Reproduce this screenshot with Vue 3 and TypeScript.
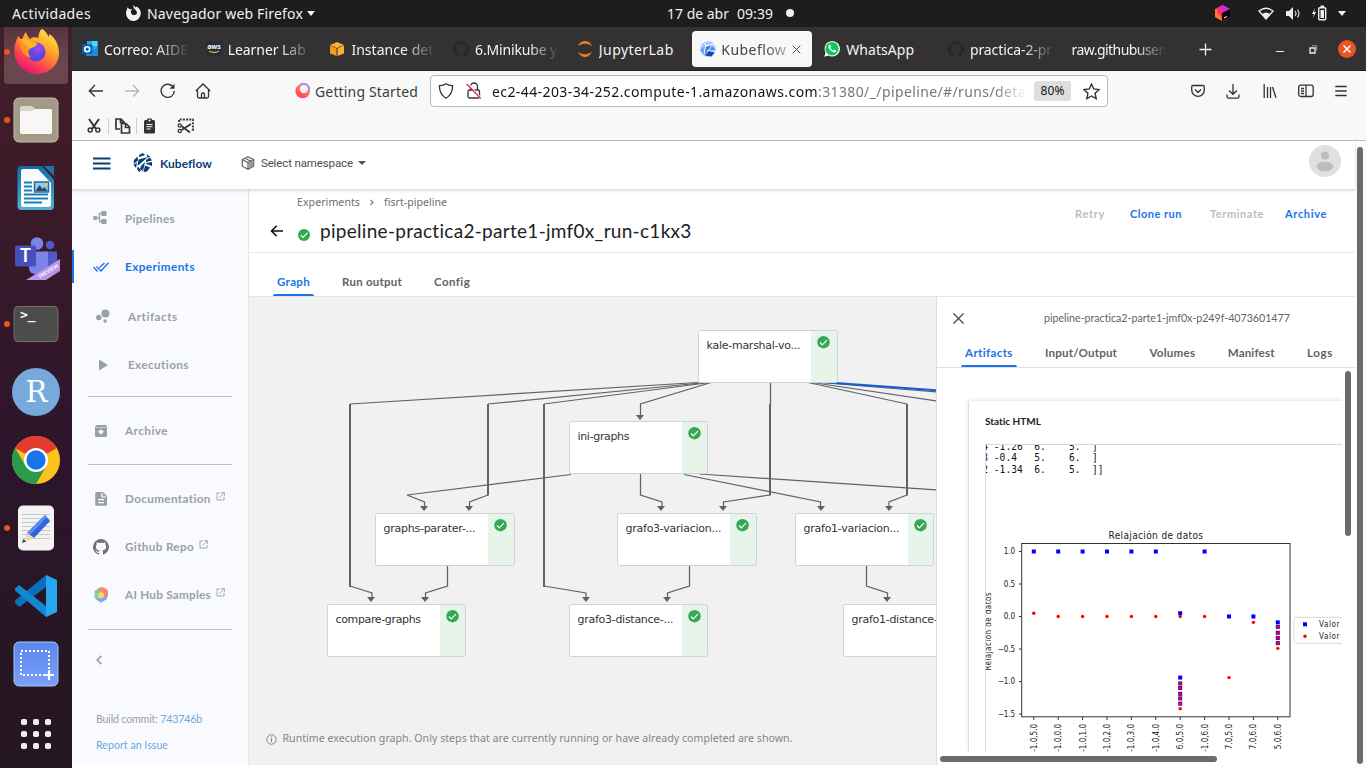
<script setup lang="ts">
import type { Directive } from 'vue'

/** Spreads a label's letters so that it takes the given width in pixels. */
const vFit: Directive<HTMLElement, number> = {
  mounted(el, { value }) {
    const count = (el.textContent ?? '').length
    const width = el.getBoundingClientRect().width
    if (count && width) el.style.letterSpacing = `${(value - width) / count}px`
  },
}

interface Tab { icon: string; label: string; width: number }
const tabs: Tab[] = [
  { icon: 'outlook', label: 'Correo: AIDE', width: 84 },
  { icon: 'aws', label: 'Learner Lab', width: 78 },
  { icon: 'cube', label: 'Instance det', width: 82 },
  { icon: 'github', label: '6.Minikube y', width: 82 },
  { icon: 'jupyter', label: 'JupyterLab', width: 75 },
  { icon: 'kubeflow', label: 'Kubeflow', width: 65 },
  { icon: 'whatsapp', label: 'WhatsApp', width: 68 },
  { icon: 'github', label: 'practica-2-pr', width: 82 },
  { icon: '', label: 'raw.githubuserc', width: 98 },
]

const dock = ['firefox', 'files', 'writer', 'teams', 'terminal', 'rstudio', 'chrome', 'editor', 'vscode', 'shot', 'apps']
const running = ['firefox', 'files', 'terminal', 'editor']

interface NavItem { id: string; label: string; width: number; cls?: string; external?: boolean }
const navTop: NavItem[] = [
  { id: 'pipelines', label: 'Pipelines', width: 50 },
  { id: 'experiments', label: 'Experiments', width: 70, cls: 'active' },
  { id: 'artifacts', label: 'Artifacts', width: 50, cls: 'inset first' },
  { id: 'executions', label: 'Executions', width: 61, cls: 'inset' },
]
const navArchive: NavItem[] = [{ id: 'archive', label: 'Archive', width: 43 }]
const navLinks: NavItem[] = [
  { id: 'doc', label: 'Documentation', width: 86, external: true },
  { id: 'github', label: 'Github Repo', width: 69, external: true },
  { id: 'hub', label: 'AI Hub Samples', width: 86, external: true },
]
const navGroups = [navTop, navArchive, navLinks]

interface GraphNode { x: number; y: number; w: number; label: string; len: number }
const nodes: GraphNode[] = [
  { x: 698.5, y: 330.5, w: 139, label: 'kale-marshal-vo...', len: 94 },
  { x: 569.5, y: 421.5, w: 138, label: 'ini-graphs', len: 52 },
  { x: 375.5, y: 513.5, w: 139, label: 'graphs-parater-...', len: 92 },
  { x: 617.5, y: 513.5, w: 139, label: 'grafo3-variacion...', len: 96 },
  { x: 795.5, y: 513.5, w: 138, label: 'grafo1-variacion...', len: 96 },
  { x: 327.5, y: 604.5, w: 138, label: 'compare-graphs', len: 85.5 },
  { x: 569.5, y: 604.5, w: 138, label: 'grafo3-distance-...', len: 96 },
  { x: 843.5, y: 604.5, w: 138, label: 'grafo1-distance-...', len: 96 },
]
const thinEdges = [
  '698,382.5 350,404', '350,586 372,593 372,598', '706,382.5 488,404', '488,495 469.5,502 469.5,507',
  '710,382.5 544,404', '544,586 586,593 586,598', '711,382.5 640.5,404 640.5,415',
  '571,474.5 407,495 424.5,502 424.5,507', '640.5,474 640.5,495 662,502 662,507',
  '770.5,382 770.5,405', '770,495 723.5,502 723.5,507', '684,474.5 820.5,502 820.5,507',
  '700,474 937,490', '808,382.5 907,404', '907,495 889,502 889,507', '812,382.5 937,401',
  '447.5,566 447.5,586 425.5,593 425.5,598', '689.5,566 689.5,586 667.5,593 667.5,598',
  '866.5,566 866.5,586 887.5,593 887.5,598', '820,382.5 937,392',
]
const thickEdges = ['350,404 350,587', '488,404 488,495.5', '544,404 544,587', '770,404 770,495.5', '907,404 907,495.5']
const arrows: [number, number][] = [
  [371, 597], [469, 506], [586, 597], [640, 415], [424, 506], [661, 506], [723, 506], [821, 506], [889, 506],
  [425, 597], [667, 597], [887, 597],
]

const matrixRows = [
  { y: 450, text: '4 -1.26  6.    5.  ]' },
  { y: 461, text: '3 -0.4   5.    6.  ]' },
  { y: 473, text: '2 -1.34  6.    5.  ]]' },
]
const px = (i: number) => 1033.8 + i * 24.4
const py = (v: number) => 616.5 - v * 65
const yTicks = [1, 0.5, 0, -0.5, -1, -1.5]
const yText = (v: number) => v.toFixed(1).replace('-', '−')
const xTicks = ['-1.0,5.0', '-1.0,0.0', '-1.0,1.0', '-1.0,2.0', '-1.0,3.0', '-1.0,4.0', '6.0,5.0', '-1.0,6.0', '7.0,5.0', '7.0,6.0', '5.0,6.0']
const blue: [number, number][] = [
  [0, 1], [1, 1], [2, 1], [3, 1], [4, 1], [5, 1], [7, 1], [6, 0.05], [8, 0], [9, 0],
  [10, -0.09], [10, -0.16], [10, -0.25], [10, -0.33], [10, -0.41],
  [6, -0.94], [6, -1.03], [6, -1.1], [6, -1.19], [6, -1.26], [6, -1.34],
]
const red: [number, number][] = [
  [0, 0.05], [1, 0], [2, 0], [3, 0], [4, 0], [5, 0], [6, 0], [7, 0], [8, -0.94], [9, -0.09],
  [10, -0.16], [10, -0.25], [10, -0.33], [10, -0.41], [10, -0.49],
  [6, -1.03], [6, -1.1], [6, -1.19], [6, -1.26], [6, -1.34], [6, -1.42],
]
const appDots = [0, 1, 2].flatMap((r) => [0, 1, 2].map((c) => [c * 12, r * 12]))
const GITHUB = 'M8 0a8 8 0 0 0-2.53 15.59c.4.07.55-.17.55-.38v-1.4c-2.23.49-2.7-1.05-2.7-1.05-.36-.93-.89-1.18-.89-1.18-.73-.5.05-.49.05-.49.8.06 1.23.83 1.23.83.72 1.22 1.87.87 2.33.66.07-.52.28-.87.51-1.07-1.78-.2-3.64-.89-3.64-3.95 0-.87.31-1.59.82-2.15-.08-.2-.36-1.02.08-2.12 0 0 .67-.22 2.2.82a7.6 7.6 0 0 1 4 0c1.53-1.04 2.2-.82 2.2-.82.44 1.1.16 1.92.08 2.12.51.56.82 1.28.82 2.15 0 3.07-1.87 3.75-3.65 3.95.29.25.54.73.54 1.48v2.2c0 .21.15.46.55.38A8 8 0 0 0 8 0z'
</script>

<template>
  <div class="desktop">
    <header class="topbar">
      <span v-fit="79" class="act">Actividades</span>
      <svg class="ff-mono" width="17" height="17" viewBox="0 0 17 17"><path d="M8.5 1l2 2.5 1.3-1C15 5 16 7 15.800 9.500A7.400 7.400 0 0 1 1 9.500C1 7 2 5.500 2.600 3.200L4.300 5.300 7.500 5.200C6 6 5.600 7.300 6 8.500c.3 1.900 2.200 3 4 2.500 2.400-.7 2.600-3.300.6-5C9 5 8 3 8.500 1z" fill="#f2f2f2"/></svg>
      <span v-fit="156" class="app-name">Navegador web Firefox</span>
      <i class="caret"></i>
      <span v-fit="62" class="date">17 de abr</span>
      <span v-fit="36" class="time">09:39</span>
      <i class="dot"></i>
      <svg class="jb" width="15" height="16" viewBox="0 0 15 16"><path d="M7.500 0L15 4v8l-7.500 4L0 12V4z" fill="#fa3a4c"/><path d="M0 4l7.500 3v9L0 12z" fill="#ff7a2a"/><path d="M7.500 0L15 4l-7 4-4-6z" fill="#c42be0"/><path d="M3 2.500L9 7l-2 7-5-8z" fill="#ff2f5e"/><path d="M7 8l8-4v8l-8 4z" fill="#050505"/><path d="M9 13l3-1.500" stroke="#fff"/></svg>
      <svg class="wifi" width="16" height="14" viewBox="0 0 16 14"><path d="M1 4Q8-1.500 15 4L8 12z" fill="none" stroke="#eee" stroke-width="1.300"/><path d="M4 7q4-3 8 0l-4 5z" fill="#eee"/></svg>
      <svg class="vol" width="15" height="14" viewBox="0 0 15 14"><path d="M0 4h3l4-4v13l-4-4H0z" fill="#eee"/><path d="M9 4q2 2.500 0 5M11.500 2.500q3 4 0 8" fill="none" stroke="#ddd" stroke-width="1.200"/></svg>
      <svg class="bat" width="15" height="17" viewBox="0 0 15 17"><path d="M3 3L0 9h2l-1 4 3-6H2z" fill="#eee"/><rect x="6.700" y="2.700" width="7" height="12" rx="1" fill="none" stroke="#eee" stroke-width="1.400"/><path d="M8.500 5h3.500v8H8.500zM8.500 .5h3.500v2H8.500z" fill="#eee"/></svg>
      <i class="caret end"></i>
    </header>

    <div class="body">
      <aside class="dock">
        <div v-for="d in dock" :key="d" class="dock-cell" :class="{ focus: d === 'firefox' }">
          <i v-if="running.includes(d)" class="run"></i>
          <svg width="48" height="48" viewBox="0 0 48 48">
            <defs>
              <linearGradient id="ffbody" x1=".9" y1="0" x2=".3" y2="1"><stop offset="0" stop-color="#fff04a"/><stop offset=".45" stop-color="#ff9a2a"/><stop offset=".75" stop-color="#ff4050"/><stop offset="1" stop-color="#e5107a"/></linearGradient>
              <radialGradient id="ffball" cx=".6" cy=".3"><stop offset="0" stop-color="#a04bf0"/><stop offset="1" stop-color="#5a45d8"/></radialGradient>
              <linearGradient id="shotbg" x1="0" y1="0" x2="0" y2="1"><stop offset="0" stop-color="#5b86f0"/><stop offset="1" stop-color="#7ba0f8"/></linearGradient>
              <linearGradient id="wr" x1="0" y1="0" x2="0" y2="1"><stop offset="0" stop-color="#0f6ca8"/><stop offset="1" stop-color="#4fb2d8"/></linearGradient>
            </defs>
            <g v-if="d === 'firefox'">
              <path d="M6 8l3 4 4-8 4 7c3-2 6-2 9-1 0-5 2-9 4-9 2 2 4 3 6 8l1-3c7 5 11 14 9 24A22.500 22.500 0 0 1 2 25C1.500 18 3 13 6 8z" transform="translate(.5 0)" fill="url(#ffbody)"/>
              <circle cx="24" cy="24" r="9.500" fill="url(#ffball)"/>
              <path d="M8 11c6 0 9 0 11 3 2 1 5 0 6 2-1 3-5 3-7 5-3 2-1 6 1 9-7-2-12-8-11-19z" fill="#ff9425"/>
              <path d="M8 11c6 0 9 0 11 3 2 1 5 0 6 2-1 3-5 3-7 5z" fill="#ffb52b"/>
            </g>
            <g v-else-if="d === 'files'">
              <rect x="2" y="2" width="44" height="44" rx="5" fill="#a09a86" stroke="#c4bfae"/>
              <path d="M8 12q0-2 2-2h9q2 0 4 3h15q2 0 2 2v5H8z" fill="#dad7ca"/><path d="M8 17q0-2 2-2h10l3-2h15q2 0 2 2v21q0 2-2 2H10q-2 0-2-2z" fill="#f8f7f5"/>
            </g>
            <g v-else-if="d === 'writer'">
              <path d="M9.500 2H30l12 14v26q0 4-4 4H9.500q-4 0-4-4V6q0-4 4-4z" fill="url(#wr)"/>
              <path d="M11 5h15l13 14v21q0 3-3 3H11q-2 0-2-2V7q0-2 2-2z" fill="#fbfbfb"/><path d="M32 2h10v10z" fill="#1c76ad"/>
              <path d="M12 18.500h8M12 22.500h8M12 26.500h8M12 30.500h24M12 34.500h24M12 38.500h18" stroke="#1c7eb8" stroke-width="2"/>
              <rect x="22.500" y="18" width="14" height="10" fill="#8fd0f0" stroke="#1c6ea8" stroke-width="1.500"/><path d="M23.500 27l4-6 3 4 2-2 3 4z" fill="#33475a"/><circle cx="34.500" cy="20.500" r="1.500" fill="#f4c430"/>
            </g>
            <g v-else-if="d === 'teams'" transform="translate(0 4.500)">
              <circle cx="25" cy="7" r="6.300" fill="#7b83eb"/><circle cx="38" cy="8.500" r="4.200" fill="#5059c9"/>
              <path d="M34 15h11v14q-2 6-10 6z" fill="#5059c9"/><path d="M17 15h19v16q-2 7-10 7-9 0-9-7z" fill="#7b83eb"/>
              <rect x="3" y="9" width="21" height="21" rx="2" fill="#4650b8"/><text x="13.500" y="25.500" class="teams-t">T</text>
              <path d="M14 43.500L48 22.500v12L34 43.500z" fill="#b795e8"/><text transform="translate(28 42) rotate(-32)" class="preview">PREVIEW</text>
            </g>
            <g v-else-if="d === 'terminal'">
              <rect x="2" y="6.500" width="44" height="35" rx="4" fill="#4c4c4a" stroke="#73706c"/><text x="8" y="19" class="term-t">&gt;_</text>
            </g>
            <g v-else-if="d === 'rstudio'"><circle cx="24" cy="24" r="24" fill="#75aadb"/><text x="24.500" y="33.500" class="r-t">R</text></g>
            <g v-else-if="d === 'chrome'">
              <circle cx="24" cy="24" r="24" fill="#fcc31e"/><path d="M24 24L3.200 12A24 24 0 0 1 44.800 12z" fill="#e33b2e"/>
              <path d="M3.200 12A24 24 0 0 0 24 48l10.400-18L24 24 13.600 30z" fill="#299c4a"/><circle cx="24" cy="24" r="12" fill="#fff"/><circle cx="24" cy="24" r="9.700" fill="#1a73e8"/>
            </g>
            <g v-else-if="d === 'editor'">
              <rect x="6" y="1.500" width="36" height="45" rx="5" fill="#f3f3f3"/><path d="M10 10.500h28M10 14.500h28M10 18.500h28M10 22.500h28M10 26.500h28M10 30.500h28M10 34.500h28" stroke="#c8c8c8"/>
              <path d="M33 11l5 6-16 17-7-5z" fill="#2f66dc"/><path d="M33 11l2 2-17 18-3-2z" fill="#5b8cf2"/><path d="M15 29l7 5-9 4z" fill="#f7d4b2"/><path d="M11.500 35l2.500 2.500-4 1.500z" fill="#333"/>
            </g>
            <g v-else-if="d === 'vscode'">
              <path d="M3 31l4.500 4L34 15V3L3 28.500z" fill="#0b70b8"/><path d="M3 16.500L7 13l27 21v11L3 18.500z" fill="#1288d0"/><path d="M34 3l11 5v32l-11 5z" fill="#27a7f1"/>
            </g>
            <g v-else-if="d === 'shot'">
              <rect x="2" y="2" width="44" height="44" rx="5" fill="url(#shotbg)" stroke="#a8c2fa"/><rect x="9" y="11" width="28" height="24" fill="none" stroke="#fff" stroke-width="2" stroke-dasharray="2 2"/><path d="M37 30v10M32 35h10" stroke="#fff" stroke-width="2.200"/>
            </g>
            <g v-else><rect v-for="(p, i) in appDots" :key="i" :x="p[0] + 9" :y="p[1] + 11" width="6" height="6" rx="1.800" fill="#f0efee"/></g>
          </svg>
        </div>
      </aside>

      <main class="browser">
        <div class="tabs">
          <div v-for="(t, i) in tabs" :key="i" class="tab" :class="{ current: i === 5, plain: !t.icon }">
            <svg v-if="t.icon" width="16" height="16" viewBox="0 0 16 16">
              <g v-if="t.icon === 'outlook'"><rect x="5" y="0" width="10.500" height="9" fill="#28a8ea"/><rect x="10" width="5.500" height="5" fill="#50d9ff"/><path d="M4 8h12v6q0 1-1 1H4z" fill="#1490df"/><rect y="3.500" width="10.500" height="9.500" rx="1" fill="#0364b8"/><circle cx="5.200" cy="8.200" r="2.500" fill="none" stroke="#fff" stroke-width="1.600"/></g>
              <g v-else-if="t.icon === 'aws'"><rect width="16" height="16" rx="1" fill="#232f3e"/><text x="8" y="8" class="aws-t">aws</text><path d="M3 10q5 3 10 0" stroke="#f90" stroke-width="1.300" fill="none"/></g>
              <g v-else-if="t.icon === 'cube'"><path d="M8 1l7 3-7 3-7-3z" fill="#f9b540"/><path d="M1 4.500l6.500 3V15L1 12.500z" fill="#eea020"/><path d="M15 4.500l-6.500 3V15l6.500-2.500z" fill="#f7b033"/><path d="M5.500 2v5M10.500 2v5" stroke="#d0851b" stroke-width=".6"/></g>
              <path v-else-if="t.icon === 'github'" :d="GITHUB" fill="#24292e"/>
              <g v-else-if="t.icon === 'jupyter'" fill="#f37726"><path d="M.8 5.500C3.500-1.800 12.500-1.800 15.200 5.500 11.500 1.800 4.500 1.800.8 5.500z"/><path d="M.8 10.500C3.500 17.800 12.500 17.800 15.200 10.500 11.500 14.200 4.500 14.200.8 10.500z"/></g>
              <g v-else-if="t.icon === 'kubeflow'"><circle cx="8" cy="8" r="7.800" fill="#a9c7fb"/><path d="M0 9l5-4-1 9z" fill="#6f9ff7"/><path d="M5.500 6l6-2-7 10z" fill="#3d7cf5"/><path d="M12 5l3.500 4-6 1z" fill="#4a88f8"/><path d="M5 14.500L9 9.500l5.500 2-3 4z" fill="#1348b5"/><path d="M5 5L16 3M4 13L6 4 3 1M7 9.500l9 1" stroke="#fff" stroke-width=".9" fill="none"/></g>
              <g v-else><path d="M.3 15.700L1.500 11.500A7.700 7.700 0 1 1 4.500 14.500z" fill="#fff"/><circle cx="8" cy="7.800" r="6.700" fill="#14c656"/><path d="M5 4q1-1 1.500.2l.6 1.500-.8 1q1.200 2 3 2.700l1-1 2 1q.3 1.500-1.600 2Q7.500 11.500 4.700 7 4 5 5 4z" fill="#fff"/></g>
            </svg>
            <span class="clip"><span v-fit="t.width">{{ t.label }}</span></span>
            <svg v-if="i === 5" class="tab-x" width="9" height="9" viewBox="0 0 9 9"><path d="M.7.7l7.600 7.600M8.300.7L.7 8.300" stroke="#444"/></svg>
          </div>
          <svg class="plus" width="13" height="13" viewBox="0 0 13 13"><path d="M6.500.5v12M.5 6.500h12" stroke="#f2f2f2" stroke-width="1.300"/></svg>
          <i class="min"></i>
          <svg class="restore" width="9" height="9" viewBox="0 0 9 9"><path d="M1 3h5v5H1z" fill="none" stroke="#eee" stroke-width="1.300"/><path d="M3 .7h4.700v5" fill="none" stroke="#aaa" stroke-width=".9"/></svg>
          <svg class="close" width="18" height="18" viewBox="0 0 18 18"><circle cx="9" cy="9" r="9" fill="#e95420"/><path d="M5.500 5.500l7 7M12.500 5.500l-7 7" stroke="#fff" stroke-width="1.500"/></svg>
        </div>

        <div class="toolbar">
          <div class="nav-row">
            <svg class="i-back" width="16" height="16" viewBox="0 0 16 16"><path d="M15 8H1.500M7 2L1.300 8 7 13.500" class="ln"/></svg>
            <svg class="i-fwd" width="16" height="16" viewBox="0 0 16 16"><path d="M1 8h13.500M9 2l5.700 6L9 13.500" class="ln faded"/></svg>
            <svg class="i-reload" width="16" height="16" viewBox="0 0 16 16"><path d="M14.300 8A6.600 6.600 0 1 1 12.500 3.300" class="ln"/><path d="M9.500 5.800h5V.8z" fill="#333"/></svg>
            <svg class="i-home" width="16" height="16" viewBox="0 0 16 16"><path d="M.8 8L8 1l7.200 7M2.500 7v6.500q0 1.500 1.500 1.500h8q1.500 0 1.500-1.500V7M6.500 15v-4q0-1 1.500-1t1.500 1v4" class="ln"/></svg>
            <svg class="i-gs" width="16" height="16" viewBox="0 0 16 16"><defs><linearGradient id="gs" x1=".2" y1="1" x2=".8" y2="0"><stop offset="0" stop-color="#ff3a6a"/><stop offset=".5" stop-color="#ff6a4a"/><stop offset="1" stop-color="#ffb838"/></linearGradient></defs><circle cx="7.700" cy="8" r="7.300" fill="url(#gs)"/><circle cx="9" cy="6" r="4.300" fill="#fbeef0"/><path d="M5 1.600Q12-.8 14 5q.5 3-2 4.500" fill="none" stroke="#a788f2" stroke-width="1.900"/></svg>
            <span v-fit="103" class="getting">Getting Started</span>
            <div class="url">
              <svg class="i-shield" width="16" height="16" viewBox="0 0 16 16"><path d="M8 .8q3 2 6.500 1.800Q15 10.500 8 15.300 1 10.500 1.500 2.600 5 2.800 8 .8z" class="ln"/></svg>
              <svg class="i-lock" width="16" height="18" viewBox="0 0 16 18"><rect x="2" y="8" width="11.500" height="8" rx="1.500" class="ln"/><path d="M4.500 8V4.500a3.500 3.500 0 0 1 7 0V8" class="ln"/><path d="M2 1.500l13.500 15" stroke="#fff" stroke-width="1.500"/><path d="M.8 2l14 14.500" stroke="#e22850" stroke-width="1.300"/></svg>
              <span class="address"><span v-fit="326" class="host">ec2-44-203-34-252.compute-1.amazonaws.com</span><span v-fit="208" class="path">:31380/_/pipeline/#/runs/deta</span></span>
              <b class="zoom"><span v-fit="24">80%</span></b>
              <svg class="i-star" width="17" height="17" viewBox="0 0 16 16"><path d="M8 .9l2.100 4.700 5.100.6-3.800 3.400 1 5.100L8 12.200l-4.400 2.500 1-5.100L.8 6.200l5.100-.6z" class="ln"/></svg>
            </div>
            <svg class="i-pocket" width="14" height="14" viewBox="0 0 14 14"><path d="M2 1.500h10q1.300 0 1.300 1.300V6a6.300 6.300 0 0 1-12.600 0V2.800Q.7 1.500 2 1.500zM4 5.500l3 3 3-3" class="ln"/></svg>
            <svg class="i-down" width="14" height="15" viewBox="0 0 14 15"><path d="M7 0v10M3 6.500l4 3.800 4-3.800M1 10.500v2q0 1.700 1.700 1.700h8.600q1.700 0 1.700-1.700v-2" class="ln"/></svg>
            <svg class="i-lib" width="14" height="15" viewBox="0 0 14 15"><path d="M1.200 0v14M4.500 3v11M7.500 3v11M9.500 3L13 13.800" class="ln"/></svg>
            <svg class="i-side" width="16" height="14" viewBox="0 0 16 14"><rect x=".7" y="1.200" width="14.500" height="11.300" rx="2" class="ln"/><path d="M8 1.500v11M3 4.500h3M3 7h3M3 9.500h3" class="ln"/></svg>
            <svg class="i-menu" width="12" height="12" viewBox="0 0 12 12"><path d="M.3 1.500h11.400M.3 6h11.400M.3 10.500h11.400" class="ln"/></svg>
          </div>
          <div class="edit-row">
            <svg width="14" height="16" viewBox="0 0 14 16"><path d="M2 1l7 10M12 1L5 11" stroke="#333" stroke-width="2"/><circle cx="3.200" cy="12" r="2" fill="none" stroke="#333" stroke-width="1.500"/><circle cx="10.800" cy="12" r="2" fill="none" stroke="#333" stroke-width="1.500"/></svg>
            <i></i>
            <svg width="16" height="16" viewBox="0 0 16 16"><path d="M5 11H1V1h5l3 3v2M5.500 1v3.500H9" fill="none" stroke="#333" stroke-width="1.700"/><path d="M6.500 5.500H11l3.500 3.500v6h-8zM10.500 6v3.500h4" fill="#f8f8f8" stroke="#333" stroke-width="1.700"/></svg>
            <i></i>
            <svg width="13" height="16" viewBox="0 0 13 16"><rect x="1" y="2" width="11" height="13.500" rx="1.500" fill="#333"/><rect x="4" y=".5" width="5" height="4" rx="1" fill="#333"/><circle cx="6.500" cy="2.500" r="1" fill="#fff"/><path d="M3.500 6.500h6M3.500 8.700h6M3.500 11h4" stroke="#fff"/></svg>
            <svg class="snip" width="17" height="16" viewBox="0 0 17 16"><path d="M2 4V1.500h14v10.500h-2" fill="none" stroke="#333" stroke-width="1.800" stroke-dasharray="2 1.200"/><path d="M4.500 8l8.500 6.500M4.500 12L14 6" stroke="#333" stroke-width="1.700"/><circle cx="2.700" cy="7.500" r="1.600" fill="none" stroke="#333" stroke-width="1.300"/><circle cx="2.700" cy="13" r="1.600" fill="none" stroke="#333" stroke-width="1.300"/></svg>
          </div>
        </div>

        <div class="page">
          <div class="kf">
            <header class="kf-head">
              <svg class="burger" width="18" height="13" viewBox="0 0 18 13"><path d="M0 1.500h17.500M0 6.500h17.500M0 11.500h17.500" stroke="#083f78" stroke-width="1.900"/></svg>
              <svg class="kf-logo" width="20" height="20" viewBox="0 0 20 20"><g fill="#083c75"><path d="M6 2l4-2 2 2-6 2zM13.500 1l4 3-3 .5zM1 7l3.500-3.500.5 4L.5 11zM.5 12L4 9.500 3 15zM4 16l2 3 2-1.500-3-4z"/><path d="M5.500 6.500L15 4 4.500 13zM8 13l4-4-2 9-3-2zM13 7l4-2.500 2 3-6 1.500zM13 10l6-1v4l-5.500-2zM12 12.500l5 2-3 4-3.500.5z"/></g></svg>
              <b v-fit="52" class="brand">Kubeflow</b>
              <svg class="pkg" width="14" height="14" viewBox="0 0 14 14"><path d="M7 .7l5.700 3v6.500L7 13.200l-5.700-3V3.700zM1.300 3.700L7 6.500l5.700-2.800M7 6.500v6.700M4 2.200l5.700 3v2.300" fill="none" stroke="#666" stroke-width="1.200"/><path d="M7.600 7l4.500-2.300v5.200l-4.500 2.300z" fill="#999"/></svg>
              <span v-fit="92" class="ns">Select namespace</span><i class="caret dark"></i>
              <svg class="avatar" width="32" height="32" viewBox="0 0 32 32"><circle cx="16" cy="16" r="16" fill="#e0e0e0"/><circle cx="16" cy="10.500" r="4" fill="#bdbdbd"/><ellipse cx="16" cy="21.500" rx="8.300" ry="4.800" fill="#bdbdbd"/></svg>
            </header>

            <div class="kf-body">
              <nav class="side">
                <div v-for="(g, gi) in navGroups" :key="gi" class="group" :class="'g' + gi">
                  <div v-for="n in g" :key="n.id" class="item" :class="n.cls">
                    <svg width="16" height="16" viewBox="0 0 16 16">
                      <g v-if="n.id === 'pipelines'" fill="#9aa0a6"><circle cx="2.200" cy="7" r="2.200"/><rect x="8.500" y="0" width="5" height="5"/><rect x="8.500" y="8" width="5" height="5"/><path d="M2 7h5M10 2.500H6.500v8H10" fill="none" stroke="#9aa0a6" stroke-width="1.300"/></g>
                      <g v-else-if="n.id === 'experiments'" fill="none" stroke="#1a73e8" stroke-width="1.400"><path d="M.5 8l4 4.500M3.500 7.500l4.500 4.500L15.500 3.800M6.500 8.500L11.500 4" /></g>
                      <g v-else-if="n.id === 'artifacts'" fill="#9aa0a6"><circle cx="2.800" cy="8.500" r="2.700"/><circle cx="9.500" cy="4.500" r="4"/><circle cx="9" cy="12" r="1.700"/></g>
                      <path v-else-if="n.id === 'executions'" d="M3 2.500L12 8l-9 5.500z" fill="#9aa0a6"/>
                      <g v-else-if="n.id === 'archive'"><path d="M3.500 2h9.500l1 2v9q0 1-1 1H3q-1 0-1-1V4z" fill="#9aa0a6"/><path d="M3 4.500h10" stroke="#c3c7cb"/><path d="M8 11.500L4.700 8.300h2V6.800h2.600v1.500h2z" fill="#fff"/></g>
                      <g v-else-if="n.id === 'doc'"><path d="M3.500 1H10l4 4v8.500q0 1.300-1.300 1.300H3.500q-1.300 0-1.300-1.300v-11Q2.200 1 3.500 1z" fill="#9aa0a6"/><path d="M9 2v4h4M5 8.700h6M5 11.700h6" stroke="#fff" stroke-width="1.200" fill="none"/></g>
                      <path v-else-if="n.id === 'github'" :d="GITHUB" fill="#6f7275"/>
                      <g v-else><path d="M8 0l3 4-7 4L1.500 4z" fill="#7cc89a"/><path d="M4 2l6-2 5 3-5 4z" fill="#f28b82"/><path d="M10 3l5 1-.2 6-4 2z" fill="#f3817c"/><path d="M1.500 4L6 8l-1 5-3.500-2z" fill="#8bcf9f"/><path d="M5 11l9-2v3l-6 3.800-5-3.300z" fill="#7ba9f5"/><path d="M8 5l3 1.500v3.200L8 11.500 5 9.700V6.500z" fill="#fdd663"/></g>
                    </svg>
                    <b v-fit="n.width">{{ n.label }}</b>
                    <svg v-if="n.external" class="ext" width="9" height="9" viewBox="0 0 9 9"><path d="M4 1H1v7h7V5M5 .7h3.400V4M8.300.8L3.500 5.600" fill="none" stroke="#9aa0a6" stroke-width=".9"/></svg>
                  </div>
                </div>
                <svg class="collapse" width="8" height="10" viewBox="0 0 8 10"><path d="M6.500 .8L2.200 5 6.500 9.200" fill="none" stroke="#9aa0a6" stroke-width="1.700"/></svg>
                <span class="build"><span v-fit="106">Build commit: <em>743746b</em></span></span>
                <span class="report"><em v-fit="72">Report an Issue</em></span>
              </nav>

              <section class="content">
                <div class="head">
                  <div class="head-left">
                    <div class="crumbs"><span v-fit="63">Experiments</span><svg width="6" height="7" viewBox="0 0 6 7"><path d="M1.500 1l2.500 2.500L1.500 6" fill="none" stroke="#777" stroke-width="1.100"/></svg><span v-fit="63">fisrt-pipeline</span></div>
                    <div class="title">
                      <svg class="t-back" width="13" height="12" viewBox="0 0 13 12"><path d="M13 6H1.500M6.700.8L1.500 6l5.200 5.200" fill="none" stroke="#111" stroke-width="1.600"/></svg>
                      <svg class="t-ok" width="12" height="12" viewBox="0 0 12 12"><circle cx="6" cy="6" r="6" fill="#34a853"/><path d="M2.800 6.200L5 8.400l4.400-4.500" fill="none" stroke="#fff" stroke-width="1.200"/></svg>
                      <span v-fit="372" class="run-name">pipeline-practica2-parte1-jmf0x_run-c1kx3</span>
                    </div>
                  </div>
                  <div class="actions"><b v-fit="30" class="off">Retry</b><b v-fit="52">Clone run</b><b v-fit="54" class="off">Terminate</b><b v-fit="42">Archive</b></div>
                </div>
                <div class="subtabs"><b class="sel"><span v-fit="33">Graph</span></b><b><span v-fit="60">Run output</span></b><b><span v-fit="36">Config</span></b></div>

                <div class="work">
                  <div class="canvas">
                    <svg width="687" height="468" viewBox="249 297 687 468">
                      <g fill="none" stroke="#5f6368">
                        <polyline v-for="e in thinEdges" :key="e" :points="e" stroke-width="1.250"/>
                        <polyline v-for="e in thickEdges" :key="e" :points="e" stroke-width="2"/>
                        <polyline points="822,382 937,390.300" stroke="#185bd6" stroke-width="1.800"/>
                      </g>
                      <path v-for="(a, i) in arrows" :key="i" :d="`M${a[0] - 4} ${a[1]}h8l-4 5z`" fill="#5f6368"/>
                      <g v-for="(n, i) in nodes" :key="i">
                        <rect :x="n.x" :y="n.y" :width="n.w" height="52" rx="2" fill="#fff"/>
                        <rect :x="n.x + 112.500" :y="n.y" :width="n.w - 112.500" height="52" fill="#e6f4ea"/>
                        <rect :x="n.x" :y="n.y" :width="n.w" height="52" rx="2" fill="none" stroke="#d0d2d3"/>
                        <text :x="n.x + 8" :y="n.y + 18.500" :textLength="n.len" class="node-t">{{ n.label }}</text>
                        <circle :cx="n.x + 125" :cy="n.y + 11.700" r="6.200" fill="#34a853"/>
                        <path :d="`M${n.x + 121.500} ${n.y + 12}l2.300 2.300 4.600-4.600`" fill="none" stroke="#fff" stroke-width="1.200"/>
                      </g>
                      <circle cx="271.500" cy="739.500" r="4.700" fill="none" stroke="#80868b"/><path d="M271.500 738.500v3.500M271.500 736.500v1" stroke="#80868b" stroke-width="1.200"/>
                      <text x="282.500" y="742" textLength="510" class="info-t">Runtime execution graph. Only steps that are currently running or have already completed are shown.</text>
                    </svg>
                  </div>

                  <div class="panel">
                    <div class="p-head">
                      <svg width="11" height="11" viewBox="0 0 11 11"><path d="M.5.5l10 10M10.500.5l-10 10" stroke="#555a5f" stroke-width="1.500"/></svg>
                      <span v-fit="246">pipeline-practica2-parte1-jmf0x-p249f-4073601477</span>
                    </div>
                    <div class="p-tabs"><b class="sel"><span v-fit="48">Artifacts</span></b><b><span v-fit="72">Input/Output</span></b><b><span v-fit="46">Volumes</span></b><b><span v-fit="47">Manifest</span></b><b><span v-fit="26">Logs</span></b></div>
                    <div class="p-body">
                      <div class="card">
                        <b v-fit="56" class="card-t">Static HTML</b>
                        <div class="frame">
                          <svg width="356" height="307" viewBox="986 445 356 307">
                            <g class="mono-t"><text v-for="r in matrixRows" :key="r.y" x="982.300" :y="r.y">{{ r.text }}</text></g>
                            <g class="plot-t">
                              <text x="1108.500" y="538.500" textLength="94.500" class="plot-h">Relajación de datos</text>
                              <text transform="translate(991.300 670.500) rotate(-90)" textLength="78">Relajación de datos</text>
                              <g v-for="v in yTicks" :key="v"><path :d="`M1019 ${py(v)}h3`" stroke="#333"/><text x="1015.200" :y="py(v) + 2.800" text-anchor="end">{{ yText(v) }}</text></g>
                              <g v-for="(x, i) in xTicks" :key="x"><path :d="`M${px(i)} 717v3`" stroke="#333"/><text :transform="`translate(${px(i) + 2.900} 724) rotate(-90)`" text-anchor="end">{{ x }}</text></g>
                            </g>
                            <rect x="1021.700" y="543.500" width="268.300" height="173.300" fill="none" stroke="#333"/>
                            <rect v-for="(p, i) in blue" :key="'b' + i" :x="px(p[0]) - 2" :y="py(p[1]) - 2" width="4" height="4" fill="#0000ff"/>
                            <circle v-for="(p, i) in red" :key="'r' + i" :cx="px(p[0])" :cy="py(p[1])" r="1.700" fill="#ff0000"/>
                            <rect x="1294" y="617.300" width="80" height="26" rx="2" fill="#fff" stroke="#d4d4d4" stroke-width=".9"/>
                            <rect x="1303" y="622.300" width="4" height="4" fill="#0000ff"/><circle cx="1305" cy="636.200" r="1.700" fill="#ff0000"/>
                            <text x="1319" y="626.500" textLength="20.500" class="legend-t">Valor</text><text x="1319" y="638.500" textLength="20.500" class="legend-t">Valor</text>
                          </svg>
                        </div>
                      </div>
                      <i class="bar-v"></i>
                      <i class="bar-h"></i>
                    </div>
                  </div>
                </div>
              </section>
            </div>
          </div>
          <div class="scroll"><i></i></div>
        </div>
      </main>
    </div>
  </div>
</template>

<style>
body { margin: 0; overflow: hidden; }
</style>

<style scoped>
.desktop { width: 1366px; height: 768px; overflow: hidden; display: flex; flex-direction: column; font-family: "Noto Sans", "Open Sans", sans-serif; background: #fff; }
svg { display: block; flex: none; }
span, b, em { white-space: nowrap; font-style: normal; }
span, b { display: inline-block; flex: none; }
.ln { fill: none; stroke: #333; stroke-width: 1.3; }
.faded { stroke: #b5b5b5; }

.topbar { flex: none; height: 27px; background: #1d1d1d; color: #f2f2f2; display: flex; align-items: center; font-size: 14px; padding-left: 12px; box-sizing: border-box; position: relative; z-index: 2; }
.ff-mono { margin: 0 5px 2px 34px; }
.caret { border: 4.5px solid transparent; border-top: 5px solid #f2f2f2; border-bottom: 0; margin-left: 4px; flex: none; }
.date { margin: -1px 0 0 352px; }
.time { margin: -1px 0 0 8px; }
.dot { width: 8px; height: 8px; border-radius: 4px; background: #f2f2f2; margin: -1px 0 0 13px; }
.jb { margin: -1px 0 0 421px; }
.wifi { margin-left: 28px; }
.vol { margin-left: 12px; }
.bat { margin: 0 0 1px 11px; }
.caret.end { margin-left: 11px; }

.body { flex: 1; display: flex; min-height: 0; }
.dock { width: 72px; flex: none; background: linear-gradient(180deg, #42202a 0, #3e1b29 130px, #35192a 270px, #2c152b 430px, #261623 650px, #251720 100%); overflow: hidden; display: flex; flex-direction: column; }
.dock-cell { height: 68px; flex: none; display: flex; align-items: center; justify-content: center; position: relative; }
.dock-cell:first-child { margin-top: -9px; }
.dock-cell.focus::before { content: ""; position: absolute; left: 4px; top: 8px; width: 64px; height: 58px; border-radius: 4px; background: linear-gradient(180deg, #58333b, #6a474f 60%); }
.dock-cell svg { position: relative; }
.run { position: absolute; left: 4px; top: 31px; width: 6px; height: 6px; border-radius: 3px; background: #e95420; z-index: 1; }
.teams-t { font: 700 18px Lato, sans-serif; fill: #fff; text-anchor: middle; }
.preview { font: 700 5px Lato, sans-serif; fill: #fff; letter-spacing: 0; text-anchor: start; }
.term-t { font: 700 13px "DejaVu Sans Mono", monospace; fill: #fff; }
.r-t { font: 29px "DejaVu Serif", serif; fill: #fff; text-anchor: middle; }
.aws-t { font: 700 7px "Noto Sans", sans-serif; fill: #fff; text-anchor: middle; }

.browser { flex: 1; min-width: 0; display: flex; flex-direction: column; }
.tabs { height: 44px; flex: none; box-sizing: border-box; background: #333132; border-bottom: 1px solid #1e1e1e; display: flex; align-items: center; color: #f4f4f4; font-size: 14px; padding-top: 1px; }
.tab { flex: none; width: 123.7px; height: 36px; box-sizing: border-box; padding-left: 10px; display: flex; align-items: center; gap: 6px; }
.clip { width: 85px; overflow: hidden; -webkit-mask-image: linear-gradient(90deg, #000 62%, transparent 100%); mask-image: linear-gradient(90deg, #000 62%, transparent 100%); }
.tab:nth-child(5) .clip, .tab:nth-child(7) .clip { -webkit-mask-image: none; mask-image: none; }
.tab.current { background: #f8f8f8; border-radius: 4px; color: #444; width: 120px; margin: 0 1.9px; padding-left: 8px; }
.tab.current .clip { width: 66px; -webkit-mask-image: linear-gradient(90deg, #000 65%, #0006 100%); mask-image: linear-gradient(90deg, #000 65%, #0006 100%); }
.tab.current { gap: 5px; }
.tab.plain .clip { width: 100px; -webkit-mask-image: linear-gradient(90deg, #000 62%, transparent 95%); mask-image: linear-gradient(90deg, #000 62%, transparent 95%); }
.plus { margin-left: 14px; }
.min { width: 8px; height: 1px; background: #eee; margin: 4px 0 0 64px; }
.restore { margin-left: 25px; }
.close { margin: -1px 0 0 20px; }

.toolbar { flex: none; height: 70px; box-sizing: border-box; background: #f8f8f8; border-bottom: 1px solid #bdbdbd; color: #3c3c3c; font-size: 14px; }
.nav-row { height: 40px; display: flex; align-items: center; }
.i-back { margin-left: 16px; }
.i-fwd { margin-left: 20px; }
.i-reload { margin-left: 20px; }
.i-home { margin-left: 19px; }
.i-gs { margin-left: 84px; }
.getting { margin-left: 4px; }
.url { margin-left: 12px; width: 678px; height: 32px; box-sizing: border-box; border: 1px solid #b8b8b8; border-radius: 4px; background: #fff; display: flex; align-items: center; color: #151515; flex: none; }
.i-shield { margin-left: 7px; }
.i-lock { margin-left: 12px; }
.address { margin-left: 10px; width: 535px; overflow: hidden; -webkit-mask-image: linear-gradient(90deg, #000 94%, transparent 100%); mask-image: linear-gradient(90deg, #000 94%, transparent 100%); }
.path { color: #777; }
.zoom { margin-left: 7px; width: 37px; height: 20px; border-radius: 3px; background: #dedede; font-weight: 400; font-size: 12px; line-height: 20px; text-align: center; }
.i-star { margin-left: 12px; }
.i-pocket { margin-left: 83px; }
.i-down { margin-left: 21px; }
.i-lib { margin-left: 23px; }
.i-side { margin-left: 21px; }
.i-menu { margin-left: 21px; }
.edit-row { height: 29px; display: flex; align-items: center; padding-left: 15px; }
.edit-row i { width: 1px; height: 16px; background: #ccc; margin: 0 6px 0 7px; }
.edit-row i + svg + i { margin-right: 6px; margin-left: 5px; }
.snip { margin-left: 21px; }

.page { flex: 1; min-height: 0; display: flex; }
.kf { width: 1283px; flex: none; display: flex; flex-direction: column; height: 624px; font-family: Lato, Roboto, sans-serif; }
.kf-head { height: 49px; flex: none; box-sizing: border-box; display: flex; align-items: center; padding: 0 14px 4px 21px; border-bottom: 1px solid #e2e2e2; box-shadow: 0 1px 3px #0002; position: relative; z-index: 1; background: #fff; }
.kf-logo { margin-left: 22px; }
.brand { color: #083c75; font-size: 12px; margin-left: 7px; }
.pkg { margin-left: 29px; }
.ns { color: #4a4e52; font: 11.5px Roboto, sans-serif; margin-left: 6px; }
.caret.dark { border-top-color: #555; border-width: 4px 4px 0; margin-left: 5px; }
.avatar { margin: -4px 0 0 auto; }
.kf-body { flex: 1; display: flex; min-height: 0; }

.side { width: 177px; flex: none; box-sizing: border-box; background: #f8fafd; border-right: 1px solid #e3e5e7; color: #9aa0a6; font-size: 12px; display: flex; flex-direction: column; padding-top: 5px; }
.item { height: 48px; display: flex; align-items: center; padding-left: 21px; box-sizing: border-box; position: relative; }
.item b { margin: -2px 0 0 16px; font-size: 11.7px; }
.item.active { color: #1a73e8; }
.item.active::before { content: ""; position: absolute; left: 0; top: 7px; width: 2px; height: 33px; background: #1a73e8; }
.item.inset { padding-left: 24px; }
.item.first { margin-top: 2px; }
.g0::after, .g1::after, .g2::after { content: ""; display: block; height: 1px; background: #bdc1c6; margin: 7px 16px 10px; }
.g1::after { margin: 9px 16px 10px; }
.g2::after { margin: 10px 16px 0; }
.ext { margin: -6px 0 0 5px; }
.collapse { margin: 25px 0 0 23px; }
.build { margin: 46px 0 0 24px; height: 16px; line-height: 16px; font-size: 10.7px; }
.report { margin: 10px 0 0 24px; height: 16px; line-height: 16px; font-size: 10.7px; }
.report em { display: inline-block; }
.side em { color: #6fa8dc; }

.content { flex: 1; min-width: 0; display: flex; flex-direction: column; }
.head { height: 63px; flex: none; box-sizing: border-box; border-bottom: 1px solid #e8eaed; display: flex; justify-content: space-between; padding: 5px 28px 0 21px; }
.crumbs { display: flex; align-items: center; height: 14px; gap: 9px; margin-left: 27px; color: #6a6e73; font: 10.6px "Noto Sans", sans-serif; }
.title { display: flex; align-items: center; height: 26px; margin-top: 9px; font-size: 19px; color: #202124; }
.run-name { margin-top: -2px; }
.t-ok { margin: 8px 10px 0 15px; }
.actions { display: flex; padding-top: 12px; font-size: 11px; color: #1a73e8; line-height: 14px; }
.actions .off { color: #bdbdbd; }
.actions b + b { margin-left: 25px; }
.actions b:nth-child(3) { margin-left: 28px; }
.actions b:nth-child(4) { margin-left: 21px; }
.subtabs { height: 44px; flex: none; box-sizing: border-box; border-bottom: 1px solid #e4e5e6; display: flex; align-items: flex-end; padding-left: 24px; color: #5f6368; font-size: 11.5px; }
.subtabs b { padding: 0 4px; height: 21px; line-height: 14px; margin-right: 24px; position: relative; }
.sel { color: #1a73e8; }
.subtabs .sel, .p-tabs .sel { color: #1a73e8; }
.sel::after { content: ""; position: absolute; left: 0; right: 0; bottom: 0; height: 2px; border-radius: 2px 2px 0 0; background: #1a73e8; }
.work { flex: 1; min-height: 0; display: flex; }
.canvas { width: 687px; flex: none; background: #f1f1f1; }
.node-t { font: 11px "DejaVu Sans", sans-serif; fill: #333; }
.info-t { font: 10.6px "Noto Sans", sans-serif; fill: #80868b; }

.panel { flex: 1; min-width: 0; border-left: 1px solid #dadce0; background: #fff; display: flex; flex-direction: column; }
.p-head { height: 43px; flex: none; display: flex; align-items: center; padding-left: 16px; color: #5f6368; font-size: 10.7px; }
.p-head span { margin: -2px 0 0 80px; }
.p-tabs { height: 28px; flex: none; box-sizing: border-box; border-bottom: 1px solid #e0e0e0; display: flex; padding-left: 24px; color: #5f6368; font-size: 11.6px; }
.p-tabs b { padding: 0 4px; line-height: 26px; position: relative; margin-right: 24.3px; }
.p-body { flex: 1; min-height: 0; position: relative; overflow: hidden; padding: 32px 13px 13px 31px; }
.card { height: 352px; overflow: hidden; box-sizing: border-box; border-top: 1px solid #eee; border-left: 1px solid #ddd; border-radius: 3px 0 0 0; box-shadow: -1px -1px 3px #0001; padding-left: 16px; display: flex; flex-direction: column; align-items: flex-start; }
.card-t { margin-top: 13px; font-size: 10px; line-height: 14px; color: #202124; }
.frame { margin-top: 16px; border-top: 1px solid #d8d8d8; border-left: 1px solid #d8d8d8; overflow: hidden; }
.mono-t { font: 9.6px "DejaVu Sans Mono", monospace; fill: #111; }
.mono-t text { white-space: pre; }
.plot-t { font: 8px "DejaVu Sans Condensed", "DejaVu Sans", sans-serif; font-stretch: condensed; fill: #222; }
.plot-h { font-size: 10px; }
.legend-t { font: 8px "DejaVu Sans Condensed", "DejaVu Sans", sans-serif; font-stretch: condensed; fill: #222; }
.bar-v { position: absolute; left: 408px; top: 3px; width: 6px; height: 165px; border-radius: 3px; background: #6b6b6b; }
.bar-h { position: absolute; left: 3px; bottom: 3px; width: 277px; height: 6px; border-radius: 3px; background: #6b6b6b; }
.scroll { flex: 1; background: #fcfcfc; padding: 6px 0 0 2px; }
.scroll i { display: block; width: 6px; height: 617px; border-radius: 3px; background: #6b6b6b; }
</style>
